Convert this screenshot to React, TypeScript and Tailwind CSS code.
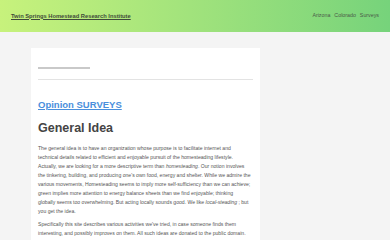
import type { ReactNode } from 'react'

const para1: ReactNode[] = [
  'The general idea is to have an organization whose purpose is to facilitate internet and',
  'technical details related to efficient and enjoyable pursuit of the homesteading lifestyle.',
  <>Actually, we are looking for a more descriptive term than <em>homesteading</em>. Our notion involves</>,
  "the tinkering, building, and producing one's own food, energy and shelter. While we admire the",
  'various movements, Homesteading seems to imply more self-sufficiency than we can achieve;',
  'green implies more attention to energy balance sheets than we find enjoyable; thinking',
  <>globally seems too overwhelming. But acting locally sounds good. We like <em>local-steading</em> ; but</>,
  'you get the idea.',
]

const para2: ReactNode[] = [
  "Specifically this site describes various activities we've tried, in case someone finds them",
  'interesting, and possibly improves on them. All such ideas are donated to the public domain.',
]

export default function App() {
  const navItems = ['Arizona', 'Colorado', 'Surveys']

  return (
    <div className="min-h-[240px] bg-[#f4f4f4] font-['Liberation_Sans',Arial,sans-serif]">
      <header className="h-8 flex items-center justify-between px-[11px] bg-gradient-to-r from-[#c7f27c] to-[#76d37b]">
        <a href="#" className="text-[5.75px] font-bold text-[#3f4a3a] underline">
          Twin Springs Homestead Research Institute
        </a>
        <nav className="flex items-center gap-[4px] text-[5.3px] text-[#4b5a48]">
          {navItems.map((item) => (
            <a key={item} href="#">
              {item}
            </a>
          ))}
        </nav>
      </header>

      <div className="pl-[31px] pt-4">
        <main className="w-[229px] bg-white px-[7px] pt-[19px] pb-6">
          <div className="w-[52px] h-[1.5px] bg-[#c9c9c9]"></div>
          <hr className="mt-[10px] border-t border-[#e3e3e3]" />

          <h2 className="mt-[19px] text-[9.5px] leading-[12px] font-bold">
            <a href="#" className="text-[#4a8fdc] underline">
              Opinion SURVEYS
            </a>
          </h2>

          <h1 className="mt-[9px] text-[12.5px] leading-[16px] font-bold text-[#444]">
            General Idea
          </h1>

          <div className="mt-[8px] text-[5.1px] leading-[9px] text-[#555]">
            <p>
              {para1.map((line, i) => (
                <span key={i} className="block whitespace-nowrap">
                  {line}
                </span>
              ))}
            </p>
            <p className="mt-[4px]">
              {para2.map((line, i) => (
                <span key={i} className="block whitespace-nowrap">
                  {line}
                </span>
              ))}
            </p>
          </div>
        </main>
      </div>
    </div>
  )
}
